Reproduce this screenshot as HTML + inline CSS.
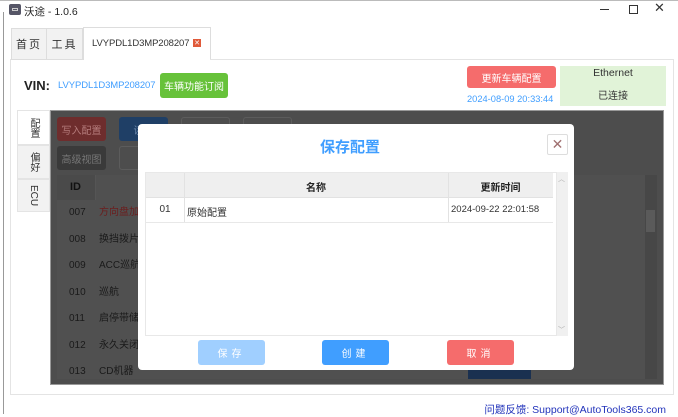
<!DOCTYPE html>
<html><head><meta charset="utf-8"><style>
*{margin:0;padding:0;box-sizing:border-box}
body{width:678px;height:414px;overflow:hidden;background:#fff;font-family:"Liberation Sans","Noto Sans CJK SC",sans-serif;font-size:11px;color:#333;position:relative;white-space:nowrap}
.a{position:absolute}
.c{display:flex;align-items:center;justify-content:center}
</style></head><body>
<!-- title bar -->
<div class="a" style="left:0;top:0;width:678px;height:1px;background:#bbb"></div>
<div class="a" style="left:9px;top:4px;width:12px;height:11px;background:#556;border-radius:2px"><div class="a" style="left:3px;top:4px;width:6px;height:3px;border:1px solid #ccc"></div></div>
<div class="a" style="left:24px;top:4px;font-size:10.5px;color:#222">沃途 - 1.0.6</div>
<div class="a" style="left:600px;top:9px;width:9px;height:1px;background:#333"></div>
<div class="a" style="left:629px;top:5px;width:9px;height:9px;border:1px solid #333"></div>
<div class="a" style="left:654px;top:0px;font-size:13px;color:#333">✕</div>
<div class="a" style="left:3px;top:12px;width:1px;height:402px;background:#999"></div>
<!-- tabs -->
<div class="a c" style="left:11px;top:28px;width:36px;height:32px;background:#f2f2f2;border:1px solid #ddd;font-size:11px;letter-spacing:2px">首页</div>
<div class="a c" style="left:46px;top:28px;width:37px;height:32px;background:#f2f2f2;border:1px solid #ddd;font-size:11px;letter-spacing:2px">工具</div>
<div class="a" style="left:83px;top:27px;width:128px;height:33px;background:#fff;border:1px solid #ddd;border-bottom:none"></div>
<div class="a" style="left:92px;top:38px;font-size:9.5px;letter-spacing:-0.1px;color:#333">LVYPDL1D3MP208207</div>
<div class="a c" style="left:193px;top:39px;width:8px;height:8px;background:#e05a3a;color:#fff;font-size:7px">✕</div>
<!-- content panel -->
<div class="a" style="left:10px;top:59px;width:664px;height:336px;border:1px solid #e4e4e4;border-top:none"></div>
<div class="a" style="left:210px;top:59px;width:464px;height:1px;background:#e4e4e4"></div>
<div class="a" style="left:24px;top:78px;font-size:13px;font-weight:bold;color:#222">VIN:</div>
<div class="a" style="left:58px;top:80px;font-size:9.5px;letter-spacing:-0.1px;color:#409eff">LVYPDL1D3MP208207</div>
<div class="a c" style="left:160px;top:73px;width:68px;height:25px;background:#67c23a;color:#fff;border-radius:3px;font-size:10px">车辆功能订阅</div>
<div class="a c" style="left:467px;top:66px;width:89px;height:22px;background:#f56c6c;color:#fff;border-radius:3px;font-size:10px">更新车辆配置</div>
<div class="a" style="left:467px;top:94px;font-size:9.3px;color:#409eff">2024-08-09 20:33:44</div>
<div class="a" style="left:560px;top:66px;width:106px;height:40px;background:#e1f3d8"></div>
<div class="a" style="left:560px;top:67px;width:106px;text-align:center;font-size:10.5px;color:#333">Ethernet</div>
<div class="a" style="left:560px;top:87px;width:106px;text-align:center;font-size:10px;color:#333">已连接</div>
<!-- vertical tabs -->
<div class="a c" style="left:17px;top:110px;width:33px;height:35px;background:#fff;border:1px solid #e4e4e4;writing-mode:vertical-rl;font-size:10px">配置</div>
<div class="a c" style="left:17px;top:145px;width:33px;height:34px;background:#f2f2f2;border:1px solid #e4e4e4;writing-mode:vertical-rl;font-size:10px">偏好</div>
<div class="a c" style="left:17px;top:179px;width:33px;height:33px;background:#f2f2f2;border:1px solid #e4e4e4;writing-mode:vertical-rl;font-size:10px">ECU</div>
<!-- dark overlay area -->
<div class="a" style="left:50px;top:110px;width:614px;height:275px;background:#4d4d4d;border:1px solid #999"></div>
<div class="a c" style="left:57px;top:117px;width:49px;height:24px;background:#6e2d2d;color:#b57c7c;border-radius:3px;font-size:10px">写入配置</div>
<div class="a c" style="left:119px;top:117px;width:49px;height:24px;background:#1f3f66;color:#6f8cb0;border-radius:3px;font-size:10px">读取</div>
<div class="a" style="left:181px;top:117px;width:49px;height:24px;border:1px solid #5c5c5c;border-radius:3px"></div>
<div class="a" style="left:243px;top:117px;width:49px;height:24px;border:1px solid #5c5c5c;border-radius:3px"></div>
<div class="a c" style="left:57px;top:146px;width:49px;height:24px;background:#3a3a3a;color:#777;border-radius:3px;font-size:10px">高级视图</div>
<div class="a" style="left:119px;top:146px;width:49px;height:24px;border:1px solid #5c5c5c;border-radius:3px"></div>
<div class="a" style="left:57px;top:175px;width:598px;height:204px;background:#505050"></div>
<div class="a" style="left:57px;top:175px;width:39px;height:25px;background:#4a4a4a;border-right:1px solid #555"></div>
<div class="a" style="left:70px;top:181px;font-size:11px;font-weight:bold;color:#111">ID</div>
<div class="a" style="left:69px;top:200px;line-height:26.5px;font-size:10px;color:#1a1a1a">007<br>008<br>009<br>010<br>011<br>012<br>013</div>
<div class="a" style="left:99px;top:200px;line-height:26.5px;font-size:10px;color:#1a1a1a"><span style="color:#6b1d1d">方向盘加</span><br>换挡拨片<br>ACC巡航<br>巡航<br>启停带储<br>永久关闭<br>CD机器</div>
<div class="a" style="left:645px;top:175px;width:12px;height:204px;background:#474747"></div>
<div class="a" style="left:646px;top:210px;width:9px;height:22px;background:#5a5a5a"></div>
<div class="a" style="left:468px;top:370px;width:63px;height:9px;background:#1a3050"></div>
<!-- modal -->
<div class="a" style="left:138px;top:124px;width:436px;height:246px;background:#fff;border-radius:4px"></div>
<div class="a" style="left:138px;top:136px;width:424px;text-align:center;font-size:15px;font-weight:bold;color:#409eff">保存配置</div>
<div class="a c" style="left:547px;top:134px;width:21px;height:21px;border:1px solid #ddd;border-radius:2px;color:#a07070;font-size:14px">✕</div>
<div class="a" style="left:145px;top:172px;width:412px;height:164px;border:1px solid #e8e8e8"></div>
<div class="a" style="left:146px;top:173px;width:407px;height:24px;background:#efefef"></div>
<div class="a" style="left:184px;top:173px;width:1px;height:49px;background:#e2e2e2"></div>
<div class="a" style="left:448px;top:173px;width:1px;height:49px;background:#e2e2e2"></div>
<div class="a" style="left:146px;top:197px;width:407px;height:1px;background:#e2e2e2"></div>
<div class="a" style="left:146px;top:222px;width:407px;height:1px;background:#e8e8e8"></div>
<div class="a" style="left:184px;top:179px;width:264px;text-align:center;font-weight:bold;font-size:10px;color:#222">名称</div>
<div class="a" style="left:448px;top:179px;width:105px;text-align:center;font-weight:bold;font-size:10px;color:#222">更新时间</div>
<div class="a" style="left:146px;top:204px;width:38px;text-align:center;font-size:10px">01</div>
<div class="a" style="left:187px;top:204px;font-size:10px">原始配置</div>
<div class="a" style="left:451px;top:204px;font-size:9.5px">2024-09-22 22:01:58</div>
<div class="a" style="left:557px;top:172px;width:11px;height:164px;background:#f0f0f0"></div>
<div class="a" style="left:558px;top:174px;font-size:7px;color:#aaa">︿</div>
<div class="a" style="left:558px;top:325px;font-size:7px;color:#aaa">﹀</div>
<div class="a c" style="left:198px;top:340px;width:67px;height:25px;background:#a0cfff;color:#fff;border-radius:3px;font-size:10px;letter-spacing:4px">保存</div>
<div class="a c" style="left:322px;top:340px;width:67px;height:25px;background:#409eff;color:#fff;border-radius:3px;font-size:10px;letter-spacing:4px">创建</div>
<div class="a c" style="left:447px;top:340px;width:67px;height:25px;background:#f56c6c;color:#fff;border-radius:3px;font-size:10px;letter-spacing:4px">取消</div>
<!-- footer -->
<div class="a" style="right:12px;top:402px;font-size:10.5px;color:#2233bb">问题反馈: Support@AutoTools365.com</div>
</body></html>
